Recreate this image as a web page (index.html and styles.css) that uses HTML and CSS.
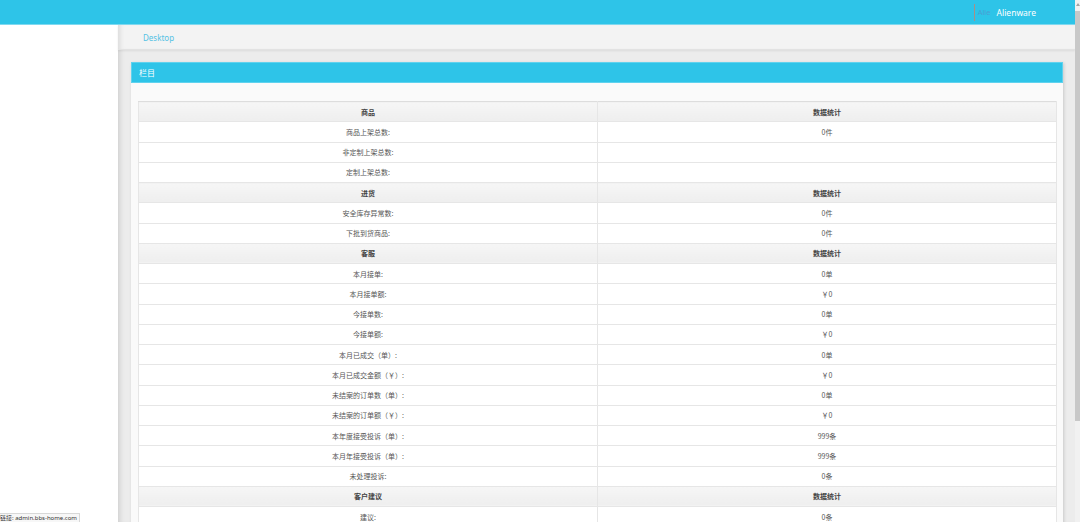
FILE: index.html
```html
<!DOCTYPE html>
<html lang="zh">
<head>
<meta charset="utf-8">
<title>Desktop</title>
<link rel="stylesheet" href="styles.css">
</head>
<body>
<div class="screen">
  <div class="page">
    <header class="topbar">
      <div class="user">
        <span class="sep"></span>
        <span class="ghost">Alie</span>
        <span class="name">Alienware</span>
      </div>
    </header>
    <div class="layout">
      <aside class="sidebar"></aside>
      <main class="main">
        <div class="crumb"><span class="crumb-link">Desktop</span></div>
        <section class="panel">
          <div class="panel-head">栏目</div>
          <div class="panel-body">
            <table class="stats">
              <tr class="hd"><td>商品</td><td>数据统计</td></tr>
              <tr><td>商品上架总数:</td><td>0件</td></tr>
              <tr><td>非定制上架总数:</td><td></td></tr>
              <tr><td>定制上架总数:</td><td></td></tr>
              <tr class="hd"><td>进货</td><td>数据统计</td></tr>
              <tr><td>安全库存异常数:</td><td>0件</td></tr>
              <tr><td>下批到货商品:</td><td>0件</td></tr>
              <tr class="hd"><td>客服</td><td>数据统计</td></tr>
              <tr><td>本月接单:</td><td>0单</td></tr>
              <tr><td>本月接单额:</td><td>￥0</td></tr>
              <tr><td>今接单数:</td><td>0单</td></tr>
              <tr><td>今接单额:</td><td>￥0</td></tr>
              <tr><td>本月已成交（单）:</td><td>0单</td></tr>
              <tr><td>本月已成交金额（￥）:</td><td>￥0</td></tr>
              <tr><td>未结案的订单数（单）:</td><td>0单</td></tr>
              <tr><td>未结案的订单额（￥）:</td><td>￥0</td></tr>
              <tr><td>本年度接受投诉（单）:</td><td>999条</td></tr>
              <tr><td>本月年接受投诉（单）:</td><td>999条</td></tr>
              <tr><td>未处理投诉:</td><td>0条</td></tr>
              <tr class="hd"><td>客户建议</td><td>数据统计</td></tr>
              <tr><td>建议:</td><td>0条</td></tr>
              <tr><td>&nbsp;</td><td>&nbsp;</td></tr>
            </table>
          </div>
        </section>
      </main>
    </div>
  </div>
  <div class="scrollbar"><span class="arrow"></span><span class="thumb"></span></div>
  <div class="status">链接: admin.bbs-home.com</div>
</div>
</body>
</html>
```
FILE: styles.css
```css
html, body {
  margin: 0;
  padding: 0;
  height: 100%;
  overflow: hidden;
  background: #ffffff;
  font-family: "Noto Sans", "Noto Sans CJK SC", sans-serif;
}
.screen {
  position: relative;
  display: flex;
  width: 1080px;
  height: 522px;
  overflow: hidden;
}
.page {
  flex: 1;
  display: flex;
  flex-direction: column;
  min-width: 0;
}
.topbar {
  height: 24px;
  flex: none;
  background: #2ec4e8;
  border-bottom: 1px solid #7fd9f0;
  display: flex;
  justify-content: flex-end;
  align-items: center;
}
.user {
  display: flex;
  align-items: center;
  margin-right: 39px;
  font-size: 8.5px;
}
.sep {
  width: 1px;
  height: 17px;
  background: #a98f86;
  margin-right: 3px;
}
.ghost {
  color: #4a9fd2;
  margin-right: 6px;
  font-size: 7.5px;
}
.name {
  color: #ffffff;
}
.layout {
  flex: 1;
  display: flex;
  min-height: 0;
}
.sidebar {
  width: 118px;
  flex: none;
  background: #ffffff;
}
.main {
  flex: 1;
  background: #ececec;
  box-shadow: inset 5px 0 5px -3px rgba(0, 0, 0, 0.12);
  display: flex;
  flex-direction: column;
  min-width: 0;
}
.crumb {
  height: 24px;
  flex: none;
  background: #f3f3f3;
  border-bottom: 1px solid #e2e2e2;
  box-shadow: 0 1px 2px rgba(0, 0, 0, 0.08), inset 5px 0 5px -3px rgba(0, 0, 0, 0.1);
  display: flex;
  align-items: center;
  padding-left: 25px;
}
.crumb-link {
  color: #55c2e4;
  font-size: 8px;
}
.panel {
  margin: 12px 12px 0 13px;
  background: #fafafa;
  box-shadow: 1px 1px 3px rgba(0, 0, 0, 0.15);
  flex: 1;
}
.panel-head {
  height: 21px;
  background: #2ec4e8;
  border: 1px solid #5fd2ee;
  box-sizing: border-box;
  color: #ffffff;
  font-size: 8px;
  display: flex;
  align-items: center;
  padding-left: 7px;
}
.panel-body {
  padding: 18px 6px 0 7px;
}
.stats {
  width: 100%;
  border-collapse: collapse;
  table-layout: fixed;
  background: #ffffff;
  font-size: 7px;
  color: #555555;
  font-family: "Noto Sans CJK SC", sans-serif;
}
.stats td {
  border: 1px solid #e6e6e6;
  text-align: center;
  height: 19.25px;
  padding: 0;
  line-height: 10px;
}
.stats tr.hd td {
  background: linear-gradient(#f6f6f6, #eeeeee);
  font-weight: bold;
  color: #444444;
  border-top: 1px solid #dddddd;
}
.scrollbar {
  width: 5px;
  flex: none;
  background: #f1f1f1;
  display: flex;
  flex-direction: column;
  align-items: flex-start;
}
.arrow {
  width: 0;
  height: 0;
  margin: 3px 0 0 1px;
  border-left: 2px solid transparent;
  border-right: 2px solid transparent;
  border-bottom: 3px solid #a3a3a3;
}
.thumb {
  width: 5px;
  height: 410px;
  margin-top: 5px;
  background: #c8c8c8;
}
.status {
  position: absolute;
  left: 0;
  bottom: 0;
  height: 8px;
  padding-right: 2px;
  background: #f7f7f7;
  border: 1px solid #d8d8d8;
  border-left: none;
  border-bottom: none;
  font-size: 6px;
  line-height: 8px;
  color: #333333;
  white-space: nowrap;
}
```
